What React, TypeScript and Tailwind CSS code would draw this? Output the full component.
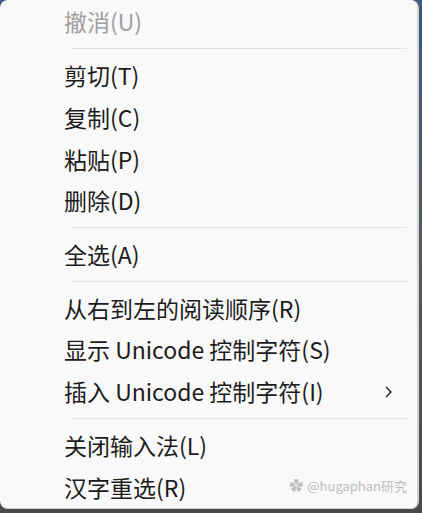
import React from "react";

type Entry =
  | { kind: "item"; label: string; disabled?: boolean; submenu?: boolean }
  | { kind: "sep" };

const entries: Entry[] = [
  { kind: "item", label: "撤消(U)", disabled: true },
  { kind: "sep" },
  { kind: "item", label: "剪切(T)" },
  { kind: "item", label: "复制(C)" },
  { kind: "item", label: "粘贴(P)" },
  { kind: "item", label: "删除(D)" },
  { kind: "sep" },
  { kind: "item", label: "全选(A)" },
  { kind: "sep" },
  { kind: "item", label: "从右到左的阅读顺序(R)" },
  { kind: "item", label: "显示 Unicode 控制字符(S)" },
  { kind: "item", label: "插入 Unicode 控制字符(I)", submenu: true },
  { kind: "sep" },
  { kind: "item", label: "关闭输入法(L)" },
  { kind: "item", label: "汉字重选(R)" },
];

export default function App() {
  return (
    <div
      className="w-[422px] h-[513px] bg-gradient-to-b from-[#3d5a80] via-[#5a5a5a] to-[#4a4a4a] overflow-hidden"
      style={{ fontFamily: '"Noto Sans CJK SC", "Noto Sans", sans-serif' }}
    >
      <div className="relative w-[419px] h-[509px] bg-[#f9f9f9] rounded-[8px] border-r-2 border-b border-[#d4d4d4] pt-[1px] flex flex-col">
        {entries.map((e, i) =>
          e.kind === "sep" ? (
            <div key={i} className="h-[12px] flex items-center pl-[72px] pr-[10px]">
              <div className="h-px w-full bg-[#e3e3e3]" />
            </div>
          ) : (
            <div
              key={i}
              className={`h-[42px] flex items-center pl-[64px] pr-[24px] text-[23px] leading-none ${
                e.disabled ? "text-[#a0a0a0]" : "text-[#1b1b1b]"
              }`}
            >
              <span className="flex-1 whitespace-nowrap">{e.label}</span>
              {e.submenu && (
                <svg width="9" height="14" viewBox="0 0 9 14" className="mt-[1px]">
                  <path d="M2 2 L7 7 L2 12" fill="none" stroke="#1b1b1b" strokeWidth="1.4" />
                </svg>
              )}
            </div>
          )
        )}
        <div className="absolute right-[10px] bottom-[12px] flex items-center gap-[4px] text-[13px] text-[#bdbdbd]">
          <span className="text-[14px]">✿</span>
          <span>@hugaphan研究</span>
        </div>
      </div>
    </div>
  );
}
